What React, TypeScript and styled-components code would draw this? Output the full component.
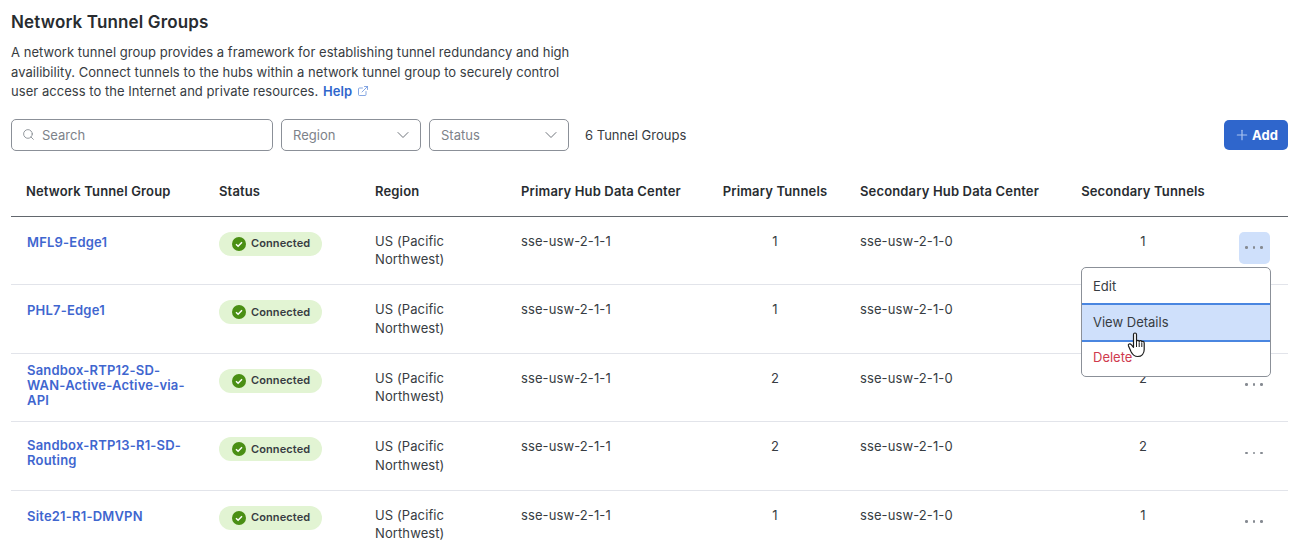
import React from 'react';
import styled, { createGlobalStyle } from 'styled-components';
import { ChevronDown, ExternalLink, Plus, Search } from 'lucide-react';

const GlobalStyle = createGlobalStyle`
  html, body {
    margin: 0;
    height: 546px;
    overflow: hidden;
    background: #fff;
    font-family: Inter, "Liberation Sans", sans-serif;
    color: #373c42;
  }
`;

const COLUMNS = '193px 156px 146px 199px 140px 221px 154px 68px';

const Page = styled.div`
  position: relative;
  height: 546px;
  padding: 13px 15px 0 11px;
  box-sizing: border-box;
  overflow: hidden;
`;
const Title = styled.h1`
  margin: 0;
  font-size: 17px;
  line-height: 19px;
  font-weight: 600;
  letter-spacing: 0.15px;
  color: #282c30;
`;
const Description = styled.p`
  margin: 11px 0 0;
  width: 575px;
  font-size: 13px;
  line-height: 19.5px;
  letter-spacing: 0.04px;
  color: #373c42;
`;
const HelpLink = styled.a`
  margin-left: 1px;
  font-weight: 600;
  color: #2f66cc;
  svg {
    margin-left: 5px;
    vertical-align: -1px;
  }
`;
const Toolbar = styled.div`
  display: flex;
  align-items: center;
  margin-top: 17px;
  height: 32px;
`;
const SearchBox = styled.div`
  display: flex;
  align-items: center;
  gap: 7px;
  box-sizing: border-box;
  width: 262px;
  height: 32px;
  padding: 0 10px;
  border: 1px solid #8b9098;
  border-radius: 5px;
  font-size: 13px;
  color: #7d8289;
`;
const SelectBox = styled.div<{ $width: number }>`
  display: flex;
  align-items: center;
  justify-content: space-between;
  box-sizing: border-box;
  width: ${(p) => p.$width}px;
  height: 32px;
  margin-left: 8px;
  padding: 0 7px 0 11px;
  border: 1px solid #8b9098;
  border-radius: 5px;
  font-size: 13px;
  color: #7d8289;
  svg {
    color: #6f747b;
  }
`;
const GroupCount = styled.span`
  margin-left: 16px;
  font-size: 13px;
  color: #373c42;
`;
const AddButton = styled.button`
  display: flex;
  align-items: center;
  gap: 2px;
  margin-left: auto;
  box-sizing: border-box;
  width: 64px;
  height: 30px;
  padding: 0 0 0 10px;
  border: none;
  border-radius: 5px;
  background: #2f66cc;
  color: #fff;
  font: 700 13px Inter, sans-serif;
  letter-spacing: 0.1px;
  svg {
    color: #a9c3f0;
  }
`;
const HeaderRow = styled.div`
  display: grid;
  grid-template-columns: ${COLUMNS};
  align-items: center;
  box-sizing: border-box;
  height: 47px;
  margin-top: 19px;
  padding-bottom: 4px;
  border-bottom: 1px solid #62676d;
  font-size: 13px;
  font-weight: 600;
  letter-spacing: 0.15px;
  color: #282c30;
`;
const HeaderCell = styled.div<{ $center?: boolean }>`
  padding: 0 ${(p) => (p.$center ? 0 : 15)}px;
  text-align: ${(p) => (p.$center ? 'center' : 'left')};
  white-space: nowrap;
`;
const Row = styled.div`
  display: grid;
  grid-template-columns: ${COLUMNS};
  box-sizing: border-box;
  height: 68.5px;
  padding-top: 15px;
  border-bottom: 1px solid #e2e4ea;
  font-size: 13px;
  line-height: 18.5px;
  letter-spacing: 0.1px;
`;
const NameCell = styled.a<{ $offset: number }>`
  padding: 0 10px 0 16px;
  margin-top: ${(p) => p.$offset}px;
  font-weight: 600;
  line-height: 15px;
  letter-spacing: 0.2px;
  color: #3f66cf;
`;
const Cell = styled.div<{ $center?: boolean }>`
  padding: 0 15px;
  text-align: ${(p) => (p.$center ? 'center' : 'left')};
`;
const StatusPill = styled.span`
  display: inline-flex;
  align-items: center;
  gap: 5px;
  box-sizing: border-box;
  width: 103px;
  height: 24px;
  padding-left: 13px;
  border-radius: 12px;
  background: #e2f4d3;
  font-size: 11px;
  font-weight: 600;
  letter-spacing: 0.1px;
  color: #373c42;
`;
const ActionCell = styled.div`
  display: flex;
  justify-content: center;
`;
const MoreButton = styled.button<{ $active?: boolean }>`
  display: flex;
  align-items: center;
  justify-content: center;
  gap: 5px;
  width: 31px;
  height: 32px;
  padding: 0;
  border: none;
  border-radius: 5px;
  background: ${(p) => (p.$active ? '#cfe0fb' : 'transparent')};
`;
const Dot = styled.span`
  width: 2.5px;
  height: 2.5px;
  border-radius: 50%;
  background: #868b92;
`;
const Menu = styled.div`
  position: absolute;
  left: 1081px;
  top: 267px;
  width: 190px;
  height: 110px;
  box-sizing: border-box;
  border: 1px solid #8b9098;
  border-radius: 5px;
  background: #fff;
  overflow: hidden;
  font-size: 13px;
`;
const MenuItem = styled.div<{ $active?: boolean; $danger?: boolean }>`
  display: flex;
  align-items: center;
  box-sizing: border-box;
  height: ${(p) => (p.$active ? 39 : 34.5)}px;
  padding-left: 11px;
  padding-top: ${(p) => (p.$active || p.$danger ? 0 : 2)}px;
  padding-bottom: ${(p) => (p.$danger ? 4 : 0)}px;
  color: ${(p) => (p.$danger ? '#cf3a4e' : '#373c42')};
  background: ${(p) => (p.$active ? '#cfe0fb' : 'transparent')};
  border-top: ${(p) => (p.$active ? '2px solid #4a86e0' : 'none')};
  border-bottom: ${(p) => (p.$active ? '2px solid #4a86e0' : 'none')};
`;
const HandCursor = styled.svg`
  position: absolute;
  left: 1127px;
  top: 332px;
`;

const rows = [
  { name: 'MFL9-Edge1', primary: 1, secondary: 1, offset: 3 },
  { name: 'PHL7-Edge1', primary: 1, secondary: 1, offset: 3 },
  { name: 'Sandbox-RTP12-SD-WAN-Active-Active-via-API', primary: 2, secondary: 2, offset: -6 },
  { name: 'Sandbox-RTP13-R1-SD-Routing', primary: 2, secondary: 2, offset: 1 },
  { name: 'Site21-R1-DMVPN', primary: 1, secondary: 1, offset: 3 },
];

function CheckBadge() {
  return (
    <svg width="14" height="14" viewBox="0 0 14 14">
      <circle cx="7" cy="7" r="7" fill="#4a8f14" />
      <path d="M4 7.2 6.1 9.2 10 5.2" fill="none" stroke="#fff" strokeWidth="1.5" />
    </svg>
  );
}

function App() {
  return (
    <Page>
      <GlobalStyle />
      <Title>Network Tunnel Groups</Title>
      <Description>
        A network tunnel group provides a framework for establishing tunnel redundancy and high availibility. Connect tunnels to the hubs within a network tunnel group to securely control user access to the Internet and private resources.
        {' '}
        <HelpLink>
          Help
          <ExternalLink size={12} color="#5f8bd9" strokeWidth={1.5} />
        </HelpLink>
      </Description>
      <Toolbar>
        <SearchBox>
          <Search size={13} strokeWidth={1.5} />
          Search
        </SearchBox>
        <SelectBox $width={140}>
          Region
          <ChevronDown size={20} strokeWidth={1.2} />
        </SelectBox>
        <SelectBox $width={140}>
          Status
          <ChevronDown size={20} strokeWidth={1.2} />
        </SelectBox>
        <GroupCount>6 Tunnel Groups</GroupCount>
        <AddButton>
          <Plus size={16} strokeWidth={1.8} />
          Add
        </AddButton>
      </Toolbar>
      <HeaderRow>
        <HeaderCell>Network Tunnel Group</HeaderCell>
        <HeaderCell>Status</HeaderCell>
        <HeaderCell>Region</HeaderCell>
        <HeaderCell>Primary Hub Data Center</HeaderCell>
        <HeaderCell $center>Primary Tunnels</HeaderCell>
        <HeaderCell>Secondary Hub Data Center</HeaderCell>
        <HeaderCell $center>Secondary Tunnels</HeaderCell>
        <HeaderCell />
      </HeaderRow>
      {rows.map((row, index) => (
        <Row key={row.name}>
          <NameCell $offset={row.offset}>{row.name}</NameCell>
          <Cell>
            <StatusPill>
              <CheckBadge />
              Connected
            </StatusPill>
          </Cell>
          <Cell>US (Pacific Northwest)</Cell>
          <Cell>sse-usw-2-1-1</Cell>
          <Cell $center>{row.primary}</Cell>
          <Cell>sse-usw-2-1-0</Cell>
          <Cell $center>{row.secondary}</Cell>
          <ActionCell>
            <MoreButton $active={index === 0}>
              <Dot />
              <Dot />
              <Dot />
            </MoreButton>
          </ActionCell>
        </Row>
      ))}
      <Menu>
        <MenuItem>Edit</MenuItem>
        <MenuItem $active>View Details</MenuItem>
        <MenuItem $danger>Delete</MenuItem>
      </Menu>
      <HandCursor width="20" height="26" viewBox="0 0 20 26">
        <path d="M6.5 2.5c0-2 3-2 3 0v7c0-1.5 2.7-1.5 2.7 0.3 0-1.5 2.6-1.5 2.6.3 0-1.2 2.4-1 2.4.8v6.6c0 4-2.5 7-6.5 7-3.5 0-5-1.5-6.5-4.5L1.5 14c-.8-2 1.5-3 2.8-1.3l2.2 2.6z" fill="#fff" stroke="#1c1c1c" strokeWidth="1.2" strokeLinejoin="round" />
        <path d="M9.5 10v5M12.2 10.5V15M14.8 11v4" fill="none" stroke="#1c1c1c" strokeWidth="1" />
      </HandCursor>
    </Page>
  );
}

export default App;
